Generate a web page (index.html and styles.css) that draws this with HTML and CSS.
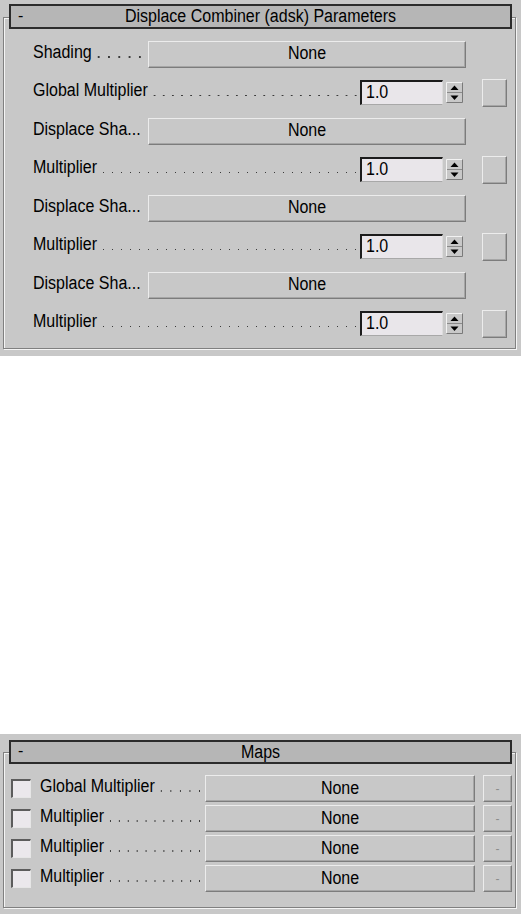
FILE: index.html
```html
<!DOCTYPE html>
<html>
<head>
<meta charset="utf-8">
<link rel="stylesheet" href="styles.css">
</head>
<body>
<section class="panel panel-params">
  <div class="frame">
    <div class="titlebar">
      <span class="minus">-</span>
      <span class="title txt">Displace Combiner (adsk) Parameters</span>
      <span></span>
    </div>
    <div class="rows">
      <div class="row">
        <div class="label map-label"><span class="txt">Shading</span><span class="leader"></span></div>
        <div class="btn map-btn"><span class="txt">None</span></div>
      </div>
      <div class="row">
        <div class="label spin-label"><span class="txt">Global Multiplier</span><span class="leader"></span></div>
        <div class="field"><span class="txt">1.0</span></div>
        <div class="spinner"><svg width="17" height="21" viewBox="0 0 17 21"><rect x="0" y="0" width="17" height="21" fill="#c8c8c8"/><path d="M0.5 20.5V0.5H16.5" stroke="#f2f2f2" fill="none"/><path d="M0.5 20.5H16.5V0.5" stroke="#7a7a7a" fill="none"/><path d="M1 10.5H16" stroke="#8a8a8a"/><polygon points="4.5,8 12.5,8 8.5,3.5" fill="#000"/><polygon points="4.5,13.5 12.5,13.5 8.5,18" fill="#000"/></svg></div>
        <div class="btn square"></div>
      </div>
      <div class="row">
        <div class="label map-label"><span class="txt">Displace Sha...</span></div>
        <div class="btn map-btn"><span class="txt">None</span></div>
      </div>
      <div class="row">
        <div class="label spin-label"><span class="txt">Multiplier</span><span class="leader"></span></div>
        <div class="field"><span class="txt">1.0</span></div>
        <div class="spinner"><svg width="17" height="21" viewBox="0 0 17 21"><rect x="0" y="0" width="17" height="21" fill="#c8c8c8"/><path d="M0.5 20.5V0.5H16.5" stroke="#f2f2f2" fill="none"/><path d="M0.5 20.5H16.5V0.5" stroke="#7a7a7a" fill="none"/><path d="M1 10.5H16" stroke="#8a8a8a"/><polygon points="4.5,8 12.5,8 8.5,3.5" fill="#000"/><polygon points="4.5,13.5 12.5,13.5 8.5,18" fill="#000"/></svg></div>
        <div class="btn square"></div>
      </div>
      <div class="row">
        <div class="label map-label"><span class="txt">Displace Sha...</span></div>
        <div class="btn map-btn"><span class="txt">None</span></div>
      </div>
      <div class="row">
        <div class="label spin-label"><span class="txt">Multiplier</span><span class="leader"></span></div>
        <div class="field"><span class="txt">1.0</span></div>
        <div class="spinner"><svg width="17" height="21" viewBox="0 0 17 21"><rect x="0" y="0" width="17" height="21" fill="#c8c8c8"/><path d="M0.5 20.5V0.5H16.5" stroke="#f2f2f2" fill="none"/><path d="M0.5 20.5H16.5V0.5" stroke="#7a7a7a" fill="none"/><path d="M1 10.5H16" stroke="#8a8a8a"/><polygon points="4.5,8 12.5,8 8.5,3.5" fill="#000"/><polygon points="4.5,13.5 12.5,13.5 8.5,18" fill="#000"/></svg></div>
        <div class="btn square"></div>
      </div>
      <div class="row">
        <div class="label map-label"><span class="txt">Displace Sha...</span></div>
        <div class="btn map-btn"><span class="txt">None</span></div>
      </div>
      <div class="row">
        <div class="label spin-label"><span class="txt">Multiplier</span><span class="leader"></span></div>
        <div class="field"><span class="txt">1.0</span></div>
        <div class="spinner"><svg width="17" height="21" viewBox="0 0 17 21"><rect x="0" y="0" width="17" height="21" fill="#c8c8c8"/><path d="M0.5 20.5V0.5H16.5" stroke="#f2f2f2" fill="none"/><path d="M0.5 20.5H16.5V0.5" stroke="#7a7a7a" fill="none"/><path d="M1 10.5H16" stroke="#8a8a8a"/><polygon points="4.5,8 12.5,8 8.5,3.5" fill="#000"/><polygon points="4.5,13.5 12.5,13.5 8.5,18" fill="#000"/></svg></div>
        <div class="btn square"></div>
      </div>
    </div>
  </div>
</section>

<section class="panel panel-maps">
  <div class="frame">
    <div class="titlebar maps-title">
      <span class="minus">-</span>
      <span class="title txt">Maps</span>
      <span></span>
    </div>
    <div class="maprows">
      <div class="maprow">
        <div class="check"></div>
        <div class="label maps-label"><span class="txt">Global Multiplier</span><span class="leader"></span></div>
        <div class="btn maps-btn"><span class="txt">None</span></div>
        <div class="btn dash">-</div>
      </div>
      <div class="maprow">
        <div class="check"></div>
        <div class="label maps-label"><span class="txt">Multiplier</span><span class="leader"></span></div>
        <div class="btn maps-btn"><span class="txt">None</span></div>
        <div class="btn dash">-</div>
      </div>
      <div class="maprow">
        <div class="check"></div>
        <div class="label maps-label"><span class="txt">Multiplier</span><span class="leader"></span></div>
        <div class="btn maps-btn"><span class="txt">None</span></div>
        <div class="btn dash">-</div>
      </div>
      <div class="maprow">
        <div class="check"></div>
        <div class="label maps-label"><span class="txt">Multiplier</span><span class="leader"></span></div>
        <div class="btn maps-btn"><span class="txt">None</span></div>
        <div class="btn dash">-</div>
      </div>
    </div>
  </div>
</section>
</body>
</html>
```

FILE: styles.css
```css
html, body {
  margin: 0;
  padding: 0;
  background: #ffffff;
}

body {
  width: 524px;
  height: 914px;
  overflow: hidden;
  font-family: "Liberation Sans", Arial, sans-serif;
  font-size: 16px;
  color: #000;
}

.txt {
  display: inline-block;
  transform: scaleY(1.15);
  transform-origin: 0 78%;
  white-space: nowrap;
}

.panel {
  width: 521px;
  background: #c8c8c8;
  box-sizing: border-box;
  padding-left: 3px;
}

.panel-params {
  height: 356px;
  padding-top: 17px;
}

.panel-maps {
  margin-top: 378px;
  height: 180px;
  padding-top: 18px;
}

.frame {
  width: 513px;
  box-sizing: border-box;
  border: 1px solid #808080;
  box-shadow: inset 1px 1px 0 #f4f4f4, 1px 1px 0 #f4f4f4;
}

.panel-params .frame {
  height: 332px;
}

.panel-maps .frame {
  height: 156px;
}

.titlebar {
  display: grid;
  grid-template-columns: 1fr auto 1fr;
  align-items: center;
  height: 25px;
  box-sizing: border-box;
  margin: -14px 3px 0 5px;
  background: #b6b6b6;
  border: 2px solid #2c2c2c;
  line-height: 19px;
}

.maps-title {
  height: 24px;
  margin-top: -13px;
}

.minus {
  padding-left: 7px;
  font-size: 16px;
  line-height: 16px;
  position: relative;
  top: -1px;
}

.title {
  text-align: center;
}

/* top panel rows */
.rows {
  display: flex;
  flex-direction: column;
  padding: 6px 0 0 29px;
}

.row {
  height: 38.5px;
  display: flex;
  align-items: center;
}

.label {
  display: flex;
  align-items: baseline;
  box-sizing: border-box;
  padding-bottom: 3px;
  line-height: 18px;
}

.leader {
  flex: 1;
  height: 1.6px;
  margin-left: 2.4px;
  margin-right: 1px;
  background-image: linear-gradient(to right, transparent 3.6px, #3a3a3a 3.6px, #3a3a3a 5.2px, transparent 5.2px);
  background-size: 8.8px 1.6px;
  background-repeat: space no-repeat;
  background-position: left bottom;
}

.map-label {
  width: 115px;
}

.map-label .leader {
  margin-right: 4.4px;
}

.spin-label {
  width: 327px;
}

.spin-label .leader {
  margin-right: 0;
}

.btn {
  box-sizing: border-box;
  background: #c8c8c8;
  border-top: 1px solid #ececec;
  border-left: 1px solid #ececec;
  border-right: 1px solid #7c7c7c;
  border-bottom: 1px solid #7c7c7c;
  box-shadow: inset -1px -1px 0 #a6a6a6;
  display: flex;
  align-items: center;
  justify-content: center;
  line-height: 18px;
}

.map-btn {
  width: 318px;
  height: 27px;
}

.field {
  width: 83px;
  height: 25px;
  box-sizing: border-box;
  background: #e9e6ea;
  border-top: 2px solid #1c1c1c;
  border-left: 2px solid #1c1c1c;
  border-right: 1px solid #dcdcdc;
  border-bottom: 1px solid #a8a8a8;
  display: flex;
  align-items: center;
  padding-left: 4px;
  line-height: 18px;
}

.spinner {
  width: 17px;
  height: 21px;
  margin-left: 3px;
  display: flex;
}

.square {
  width: 25px;
  height: 28px;
  margin-left: 19px;
}

/* maps rows */
.maprows {
  display: flex;
  flex-direction: column;
  gap: 3px;
  padding: 11px 0 0 7px;
}

.maprow {
  height: 27px;
  display: flex;
  align-items: center;
}

.check {
  width: 20px;
  height: 19px;
  box-sizing: border-box;
  background: #ebe8ec;
  border-top: 2px solid #5c5c5c;
  border-left: 2px solid #5c5c5c;
  border-right: 1px solid #e6e6e6;
  border-bottom: 1px solid #e6e6e6;
  margin-right: 9px;
}

.maps-label {
  width: 165px;
}

.maps-label .leader {
  margin-right: 1.4px;
}

.maps-btn {
  width: 270px;
  height: 27px;
}

.dash {
  width: 29px;
  height: 27px;
  margin-left: 8px;
  color: #8c8c8c;
  font-size: 12px;
}
```
